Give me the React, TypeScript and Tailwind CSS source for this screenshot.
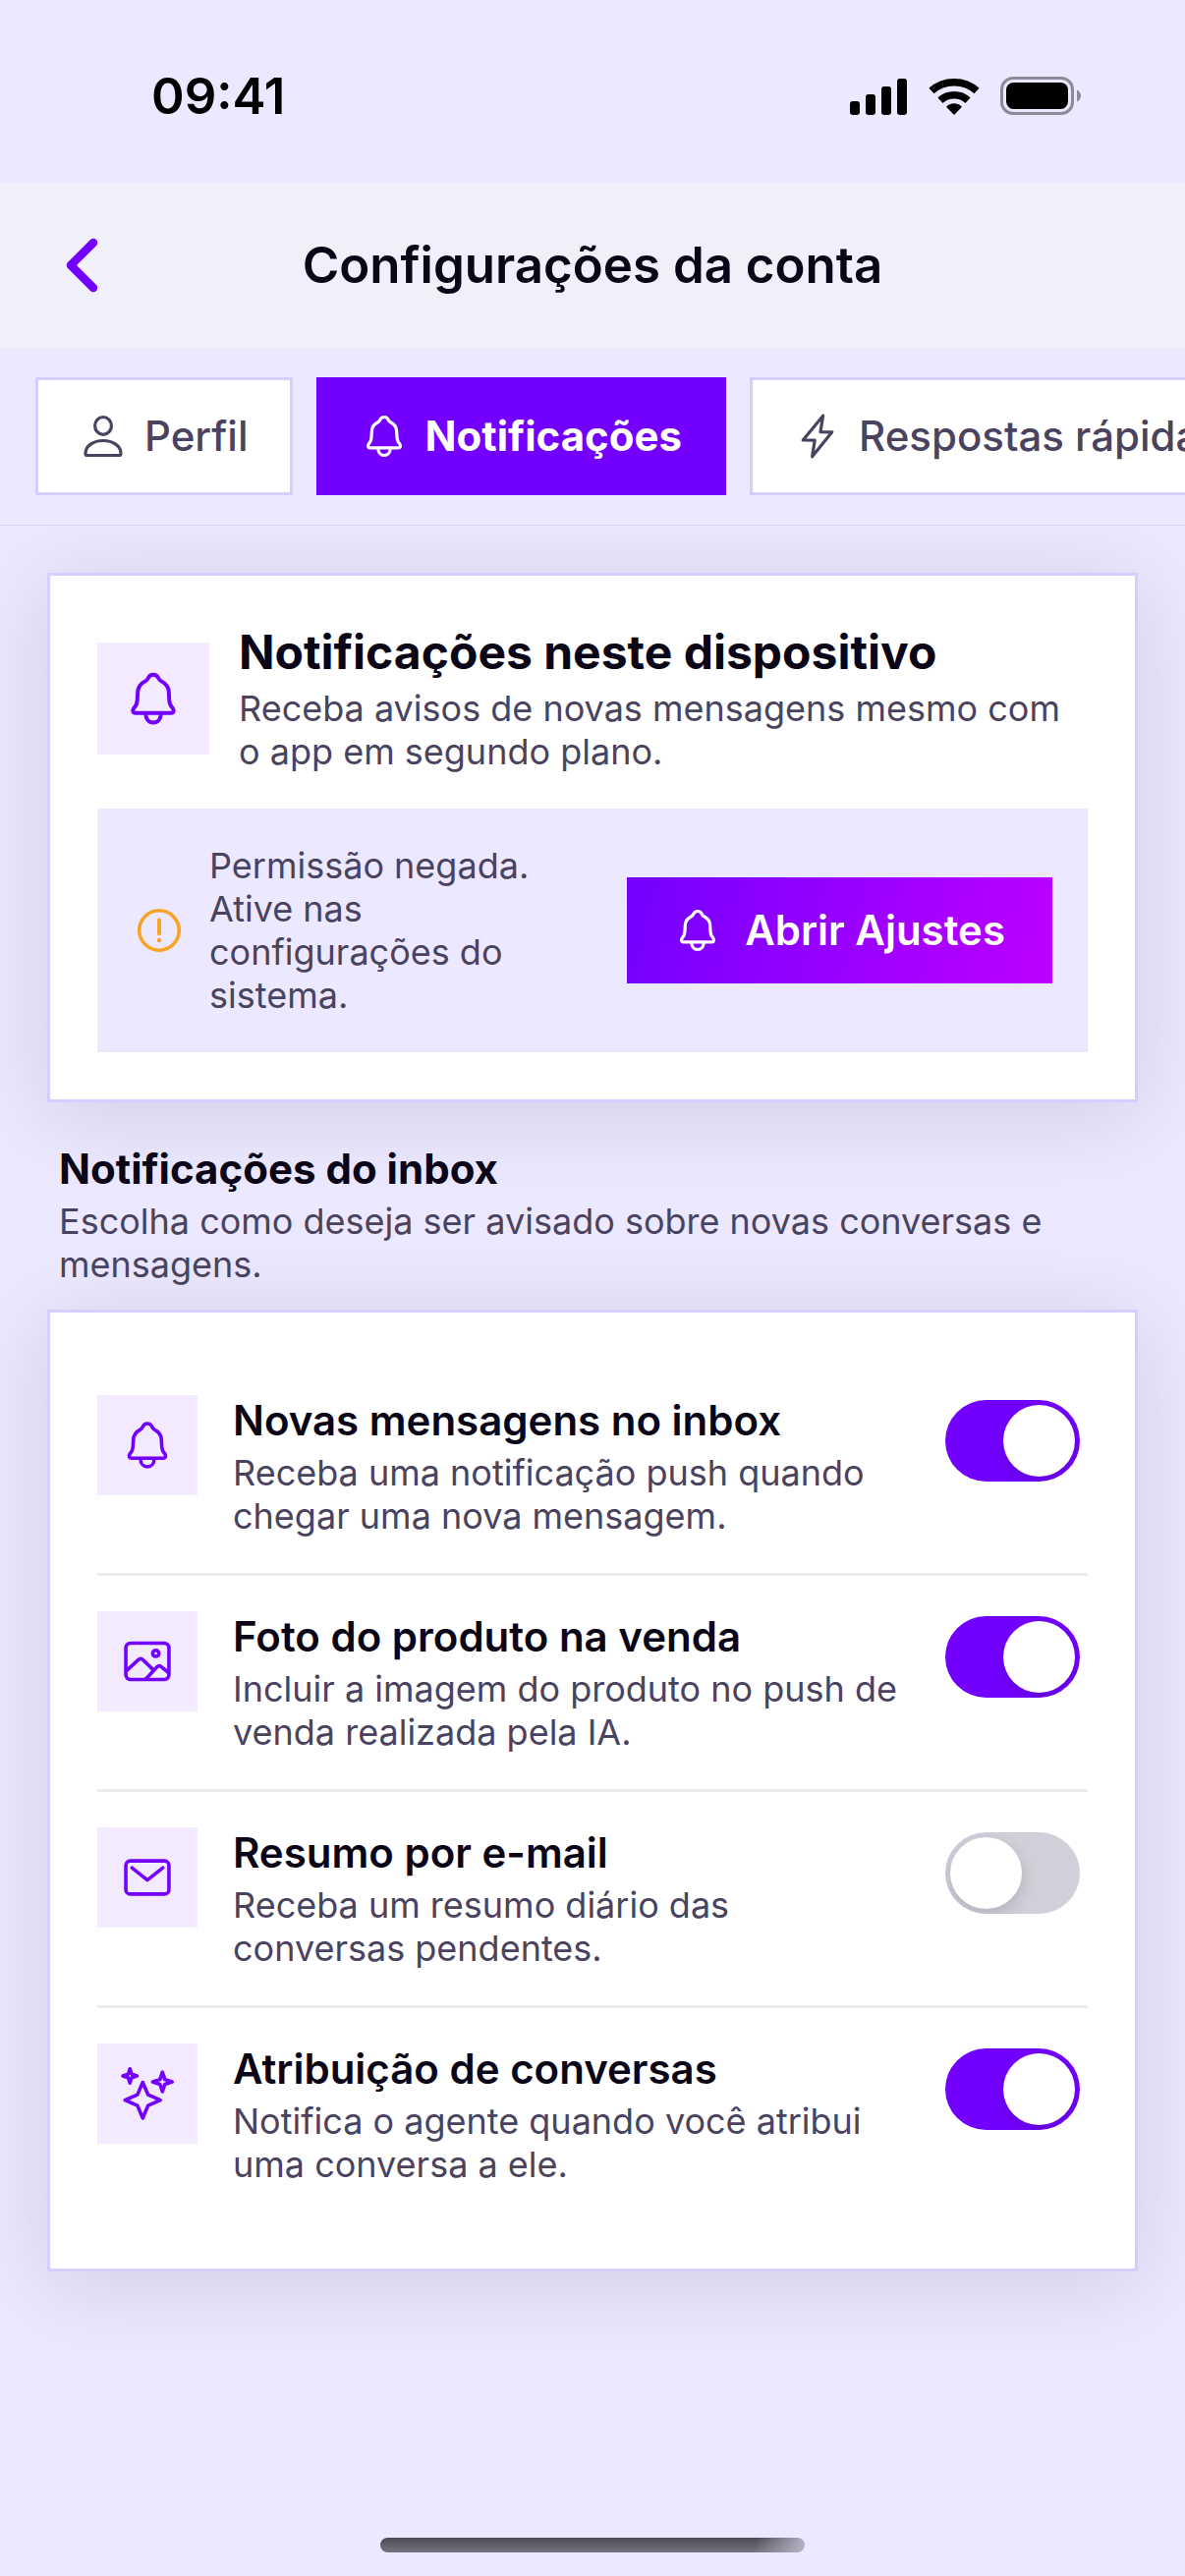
import { useState } from 'react';
import type { ReactNode } from 'react';
import clsx from 'clsx';

interface IconProps {
  className?: string;
}

interface TabItem {
  id: string;
  label: string;
  Icon: (props: IconProps) => ReactNode;
}

interface Preference extends TabItem {
  description: string;
  enabled: boolean;
}

function StrokeIcon({ className, children }: IconProps & { children: ReactNode }) {
  return (
    <svg
      className={clsx('shrink-0 overflow-visible', className)}
      viewBox="0 0 24 24"
      fill="none"
      stroke="currentColor"
      strokeWidth={1.6}
      strokeLinecap="round"
      strokeLinejoin="round"
      aria-hidden="true"
    >
      {children}
    </svg>
  );
}

const BellIcon = ({ className }: IconProps) => (
  <StrokeIcon className={className}>
    <path d="M12 2.25c-1.1 0-1.8.6-2.2 1.6-.2.5-.5.8-1 1.05C6.8 5.9 5.75 7.4 5.65 9.5c-.1 1.9 0 3.4-.5 4.8-.3.8-.8 1.2-1.1 1.7-.6 1-.3 1.9.7 1.9h14.5c1 0 1.3-.9.7-1.9-.3-.5-.8-.9-1.1-1.7-.5-1.4-.4-2.9-.5-4.8-.1-2.1-1.15-3.6-3.15-4.6-.5-.25-.8-.55-1-1.05-.4-1-1.1-1.6-2.2-1.6Z" />
    <path d="M8.9 18.1c0 2.2 1.3 3.65 3.1 3.65s3.1-1.45 3.1-3.65" />
  </StrokeIcon>
);

const PersonIcon = ({ className }: IconProps) => (
  <StrokeIcon className={className}>
    <ellipse cx="12" cy="6.7" rx="4.2" ry="4.45" />
    <path d="M3 20.7c0-3.7 4-6.45 9-6.45s9 2.75 9 6.45c0 .75-.3 1.05-.9 1.05H3.9c-.6 0-.9-.3-.9-1.05Z" />
  </StrokeIcon>
);

const BoltIcon = ({ className }: IconProps) => (
  <StrokeIcon className={className}>
    <path d="M14.8 1.6 4.6 14l6 .1-1.3 8.3L19.4 9.9l-5.9-.1Z" />
  </StrokeIcon>
);

const AlertIcon = ({ className }: IconProps) => (
  <StrokeIcon className={className}>
    <circle cx="12" cy="12" r="9" />
    <path d="M12 7.3v6.1" strokeWidth={1.8} />
    <circle cx="12" cy="16.4" r="1" fill="currentColor" stroke="none" />
  </StrokeIcon>
);

const PhotoIcon = ({ className }: IconProps) => (
  <StrokeIcon className={className}>
    <rect x="2.25" y="3.75" width="19.5" height="16.5" rx="2.2" />
    <circle cx="15.8" cy="8.4" r="1.4" />
    <path d="m2.5 16.3 5.400-5c.7-.6 1.400-.6 2.100 0l4.300 4.200" />
    <path d="m11.300 20 5-5.400c.6-.6 1.300-.7 2-.1l3.300 2.600" />
  </StrokeIcon>
);

const MailIcon = ({ className }: IconProps) => (
  <StrokeIcon className={className}>
    <rect x="2.25" y="4.5" width="19.5" height="15" rx="2" />
    <path d="m5 7.600 7 5.600 7-5.600" />
  </StrokeIcon>
);

const SparklesIcon = ({ className }: IconProps) => (
  <StrokeIcon className={className}>
    <path d="M9.9 6.900 12.300 12.500 17.900 14.950 12.300 17.400 9.900 23.100 7.500 17.400 1.900 14.950 7.500 12.500Z" />
    <path d="M18.8 2.300 19.900 5.600 23.200 6.700 19.900 7.800 18.800 11.100 17.700 7.800 14.400 6.700 17.700 5.600Z" />
    <path d="M4.100.8 4.900 3.200 7.300 4 4.900 4.800 4.100 7.200 3.300 4.800.9 4 3.300 3.200Z" />
  </StrokeIcon>
);

const tabs: TabItem[] = [
  { id: 'perfil', label: 'Perfil', Icon: PersonIcon },
  { id: 'notificacoes', label: 'Notificações', Icon: BellIcon },
  { id: 'respostas', label: 'Respostas rápidas', Icon: BoltIcon },
];

const initialPreferences: Preference[] = [
  {
    id: 'inbox',
    label: 'Novas mensagens no inbox',
    description: 'Receba uma notificação push quando chegar uma nova mensagem.',
    Icon: BellIcon,
    enabled: true,
  },
  {
    id: 'foto',
    label: 'Foto do produto na venda',
    description: 'Incluir a imagem do produto no push de venda realizada pela IA.',
    Icon: PhotoIcon,
    enabled: true,
  },
  {
    id: 'email',
    label: 'Resumo por e-mail',
    description: 'Receba um resumo diário das conversas pendentes.',
    Icon: MailIcon,
    enabled: false,
  },
  {
    id: 'atribuicao',
    label: 'Atribuição de conversas',
    description: 'Notifica o agente quando você atribui uma conversa a ele.',
    Icon: SparklesIcon,
    enabled: true,
  },
];

function StatusBar() {
  return (
    <div className="flex h-[186px] items-center justify-between pt-[10px] pr-[106px] pl-[154px] text-black">
      <span className="text-[51px] leading-[60px] font-semibold">09:41</span>
      <div className="flex items-center gap-[21px]">
        <svg className="h-[38px] w-[59px]" viewBox="0 0 59 38" fill="currentColor" aria-hidden="true">
          <rect x="0" y="24" width="10" height="14" rx="3" />
          <rect x="16" y="17" width="10" height="21" rx="3" />
          <rect x="32" y="9" width="10" height="29" rx="3" />
          <rect x="48" y="1" width="10" height="37" rx="3" />
        </svg>
        <svg className="h-[38px] w-[52px]" viewBox="0 0 52 38" aria-hidden="true">
          <g fill="none" stroke="currentColor" strokeWidth={7.5}>
            <path d="M3 13.5C15.5 1.8 36.5 1.8 49 13.5" />
            <path d="M12 23.3c7.8-7.3 20.2-7.3 28 0" />
          </g>
          <path d="M26 38l-7.3-7.4c-.5-.5-.5-1.2 0-1.6 4.2-3.6 10.4-3.6 14.6 0 .5.4.5 1.1 0 1.6Z" fill="currentColor" />
        </svg>
        <svg className="h-[40px] w-[82px]" viewBox="0 0 82 40" aria-hidden="true">
          <rect x="1.5" y="1.5" width="72" height="36" rx="11.5" fill="none" stroke="#8e8b99" strokeWidth={3} />
          <rect x="6" y="6" width="63" height="27" rx="7.5" fill="currentColor" />
          <path d="M78 13.5c2.5 1 4 3.4 4 6s-1.500 5-4 6Z" fill="#8e8b99" />
        </svg>
      </div>
    </div>
  );
}

function Header() {
  return (
    <header className="grid h-[168px] grid-cols-[1fr_auto_1fr] items-center bg-[#f1effa] px-[66px]">
      <button type="button" aria-label="Voltar" className="justify-self-start text-[#7300ff]">
        <svg className="h-[56px] w-[34px]" viewBox="0 0 34 56" fill="none" aria-hidden="true">
          <path d="M29 5 6 28l23 23" stroke="currentColor" strokeWidth={8.5} strokeLinecap="round" strokeLinejoin="round" />
        </svg>
      </button>
      <h1 className="text-[51px] leading-[62px] font-semibold">Configurações da conta</h1>
    </header>
  );
}

function Switch({ id, checked, onChange }: { id: string; checked: boolean; onChange: () => void }) {
  return (
    <input
      id={id}
      type="checkbox"
      role="switch"
      checked={checked}
      onChange={onChange}
      className="mx-2 mt-[5px] flex h-[83px] w-[137px] shrink-0 cursor-pointer appearance-none items-center overflow-hidden rounded-full bg-[#d2cfdb] px-[5px] transition-colors before:size-[73px] before:rounded-full before:bg-white before:shadow-[0_6px_16px_rgba(0,0,0,0.15)] before:content-[''] checked:justify-end checked:bg-[#7300ff]"
    />
  );
}

export default function App() {
  const [activeTab, setActiveTab] = useState('notificacoes');
  const [preferences, setPreferences] = useState(initialPreferences);

  const toggle = (id: string) => {
    setPreferences((prev) => prev.map((p) => (p.id === id ? { ...p, enabled: !p.enabled } : p)));
  };

  return (
    <div className="flex min-h-screen flex-col overflow-x-hidden bg-[#ece8ff] font-['Inter',sans-serif] text-[#0a0618]">
      <StatusBar />
      <Header />

      <nav className="relative z-10 flex gap-6 overflow-x-auto border-b border-[#d6ceff] bg-[#ece8ff] px-9 py-[30px] [scrollbar-width:none]">
        {tabs.map(({ id, label, Icon }) => (
          <button
            key={id}
            type="button"
            onClick={() => setActiveTab(id)}
            className={clsx(
              'flex h-[120px] shrink-0 items-center gap-[18px] border-3 px-[42px] text-[42px] leading-[52px]',
              activeTab === id
                ? 'border-[#7300ff] bg-[#7300ff] font-bold text-white'
                : 'border-[#d6ceff] bg-white font-medium text-[#4a4360]'
            )}
          >
            <Icon className="size-12" />
            {label}
          </button>
        ))}
      </nav>

      <main className="flex flex-col px-12 pt-12">
        <section className="flex flex-col gap-9 border-3 border-[#d6ceff] bg-white p-12 shadow-[0_12px_84px_rgba(10,6,24,0.12)]">
          <div className="flex items-center gap-[30px]">
            <div className="flex size-[114px] shrink-0 items-center justify-center bg-[#f3eaff] text-[#7300ff]">
              <BellIcon className="size-[60px]" />
            </div>
            <div className="flex flex-col gap-1.5">
              <h2 className="text-[48px] leading-[59px] font-bold">Notificações neste dispositivo</h2>
              <p className="text-[36px] leading-[44px] text-[#4a4360]">
                Receba avisos de novas mensagens mesmo com o app em segundo plano.
              </p>
            </div>
          </div>

          <div className="flex items-center gap-6 bg-[#ece8ff] p-9">
            <AlertIcon className="size-[54px] text-[#f9a425]" />
            <p className="flex-1 text-[36px] leading-[44px] text-[#4a4360]">
              Permissão negada. Ative nas configurações do sistema.
            </p>
            <button
              type="button"
              className="ml-3 flex h-[108px] shrink-0 items-center gap-6 bg-[linear-gradient(104deg,#7300ff,#bd00ff)] px-12 text-[42px] leading-[52px] font-semibold text-white"
            >
              <BellIcon className="size-12" />
              Abrir Ajustes
            </button>
          </div>
        </section>

        <div className="relative flex flex-col gap-1.5 px-3 pt-[42px] pb-6">
          <h2 className="text-[42px] leading-[51px] font-bold">Notificações do inbox</h2>
          <p className="text-[36px] leading-[44px] text-[#4a4360]">
            Escolha como deseja ser avisado sobre novas conversas e mensagens.
          </p>
        </div>

        <section className="divide-y-3 divide-[#ebebeb] border-3 border-[#d6ceff] bg-white p-12 shadow-[0_12px_84px_rgba(10,6,24,0.12)]">
          {preferences.map(({ id, label, description, Icon, enabled }) => (
            <div key={id} className="flex items-start gap-9 py-9">
              <div className="flex size-[102px] shrink-0 items-center justify-center bg-[#f3eaff] text-[#7300ff]">
                <Icon className="size-[54px]" />
              </div>
              <div className="flex flex-1 flex-col gap-1.5">
                <label htmlFor={id} className="text-[42px] leading-[51px] font-semibold">
                  {label}
                </label>
                <p className="text-[36px] leading-[44px] text-[#4a4360]">{description}</p>
              </div>
              <Switch id={id} checked={enabled} onChange={() => toggle(id)} />
            </div>
          ))}
        </section>
      </main>

      <div className="mt-auto flex justify-center pt-12 pb-6">
        <div className="h-[15px] w-[432px] rounded-full bg-[linear-gradient(100deg,transparent_88%,#b8b3c6),linear-gradient(#4b4b54,#76727e)]" />
      </div>
    </div>
  );
}
